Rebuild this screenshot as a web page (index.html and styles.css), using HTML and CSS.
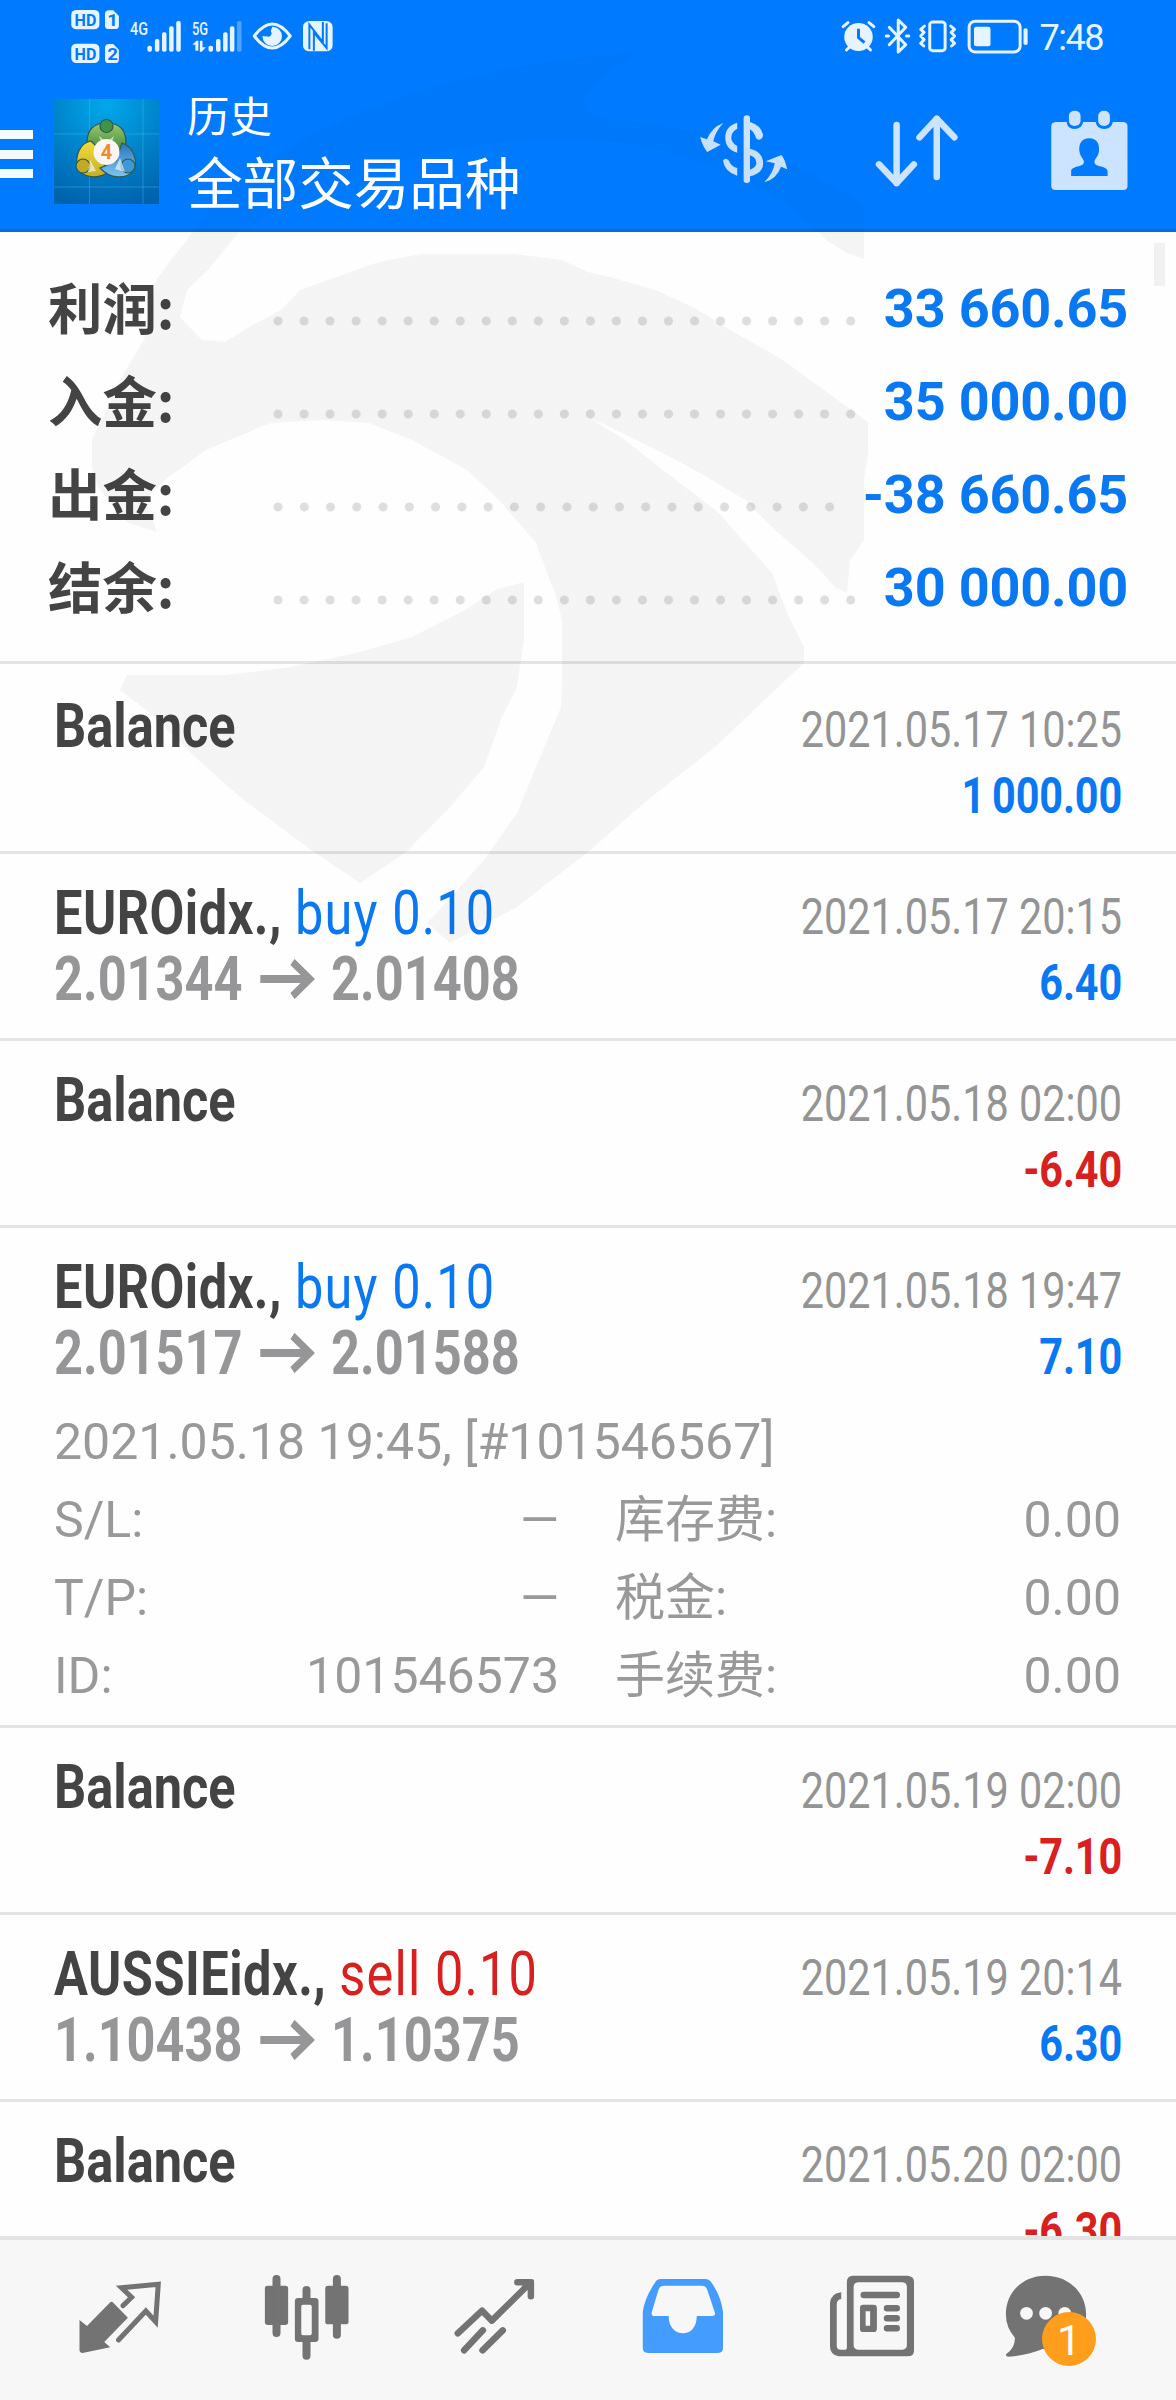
FILE: index.html
```html
<!DOCTYPE html>
<html lang="zh-CN">
<head>
<meta charset="utf-8">
<title>历史</title>
<link rel="stylesheet" href="styles.css">
</head>
<body>
<div class="app">
  <header class="header">
    <div class="status">
      <svg class="status-left" viewBox="0 0 1000 210" preserveAspectRatio="none">
        <rect x="190" y="30" width="75" height="58" rx="14"/>
        <path d="M280 42Q280 31 291 31H302L317 48V77Q317 87 307 87H290Q280 87 280 77Z"/>
        <rect x="190" y="131" width="75" height="58" rx="14"/>
        <path d="M280 143Q280 132 291 132H302L317 149V179Q317 189 307 189H290Q280 189 280 179Z"/>
        <g class="cut"><text x="199" y="79" textLength="58" lengthAdjust="spacingAndGlyphs">HD</text><text x="286" y="79">1</text><text x="199" y="180" textLength="58" lengthAdjust="spacingAndGlyphs">HD</text><text x="286" y="180">2</text></g>
        <g class="net"><text x="347" y="104" textLength="48" lengthAdjust="spacingAndGlyphs">4G</text><text x="512" y="104" textLength="43" lengthAdjust="spacingAndGlyphs">5G</text></g>
        <rect x="393" y="137" width="12" height="18" rx="5"/><rect x="413" y="117" width="12" height="38" rx="5"/><rect x="432" y="97" width="12" height="58" rx="5"/><rect x="451" y="79" width="12" height="76" rx="5"/><rect x="470" y="63" width="12" height="92" rx="5"/>
        <path d="M513 134L524 122H529V152H521V134ZM533 122H540V142H549L538 155H533Z"/>
        <rect x="556" y="137" width="12" height="18" rx="5"/><rect x="576" y="117" width="12" height="38" rx="5"/><rect x="595" y="97" width="12" height="58" rx="5"/><rect x="613" y="79" width="12" height="76" rx="5"/><rect x="632" y="63" width="12" height="92" rx="5" opacity=".35"/>
        <path class="line" d="M678 108Q726 36 774 108Q726 180 678 108Z"/>
        <path d="M726 80A26 29 0 1 1 700 108L718 110Q728 104 722 94Z"/>
        <rect x="808" y="63" width="79" height="91" rx="17"/>
        <path class="nfc" d="M825 148V74L861 126V66M837 152V98L871 144V70"/>
      </svg>
      <svg class="status-right" viewBox="660 0 560 210" preserveAspectRatio="none">
        <path class="line" d="M679 80L692 68M761 80L748 68M688 150L696 141M752 150L744 141"/>
        <ellipse cx="720" cy="111" rx="38" ry="42"/><path class="hand" d="M720 86V113L736 128"/>
        <path class="line" d="M802 82L846 134L826 156V60L846 82L802 134M794 108H800M848 108H854"/>
        <rect class="line" x="910" y="66" width="41" height="86" rx="8"/>
        <path class="line" d="M896 78L886 88L895 97L886 108L895 119L886 130L894 138M966 78L976 88L967 97L976 108L967 119L976 130L968 138"/>
        <rect class="line" x="1015" y="64" width="136" height="92" rx="17"/><rect x="1028" y="80" width="44" height="59" rx="6"/><rect x="1160" y="85" width="11" height="50" rx="5"/>
      </svg>
      <span class="clock">7:48</span>
    </div>
    <div class="bar">
      <svg class="menu" viewBox="0 0 33 48"><path d="M0 0H33V9H0ZM0 20H33V29H0ZM0 39H33V48H0Z"/></svg>
      <svg class="logo" viewBox="0 0 105 105">
        <defs>
          <radialGradient id="bg" cx=".5" cy=".05" r="1"><stop offset="0" stop-color="#00a9ea"/><stop offset=".5" stop-color="#0084cb"/><stop offset="1" stop-color="#0062ad"/></radialGradient>
          <linearGradient id="gr" x2="0" y2="1"><stop stop-color="#9bc96c"/><stop offset="1" stop-color="#2d7c31"/></linearGradient>
          <linearGradient id="ye" x2="0" y2="1"><stop stop-color="#f1dc3c"/><stop offset="1" stop-color="#c9ae24"/></linearGradient>
          <linearGradient id="bl" x2="0" y2="1"><stop stop-color="#2a76b9"/><stop offset="1" stop-color="#7cc6f0"/></linearGradient>
        </defs>
        <rect width="105" height="105" fill="url(#bg)"/>
        <path d="M35.500 0V105M89 0V105M0 35H105M0 88H105" stroke="#5cc3ee" stroke-opacity=".35" fill="none"/>
        <g stroke="#2d5a50" stroke-width="1.200">
          <path d="M33 44Q33 24 52.500 24Q72 24 72 44L67 58H38Z" fill="url(#gr)"/>
          <path d="M37 42C26 44 20 57 24 70C30 79 43 80 53 74L45 50Z" fill="url(#ye)"/>
          <path d="M68 44C79 48 84 60 80 71C72 81 56 80 46 69L62 62Z" fill="url(#bl)"/>
          <circle cx="52.500" cy="27" r="6.500" fill="#3f9448"/><circle cx="29" cy="67" r="7" fill="#c2a928"/><circle cx="74" cy="67" r="7" fill="#3f97d6"/>
        </g>
        <path d="M45 37L52.500 43L60 37L57 46H48ZM36 61L42 72L34 73ZM66 59L61 70L71 73Z" fill="#fff" fill-opacity=".6"/>
        <circle cx="52.500" cy="53" r="13" fill="#fbf6f1"/>
        <text x="52.500" y="60" class="four">4</text>
      </svg>
      <div class="titles"><div class="subtitle">历史</div><div class="title">全部交易品种</div></div>
      <svg class="action dollar" viewBox="296 330 240 246" preserveAspectRatio="none">
        <path d="M361 369Q340 393 334 424L354 434L318 456Q306 440 299 411L317 418Q331 381 361 369ZM470 547Q494 519 498 490L474 484L516 465Q526 480 531 508L515 500Q502 538 470 547Z"/>
        <rect x="415" y="346" width="17" height="203" rx="8"/>
        <path d="M398 368V386Q382 396 382 413Q382 428 398 438V458Q366 447 366 413Q366 378 398 368ZM432 366Q460 375 467 404Q466 417 456 419Q448 418 446 407Q443 396 432 388ZM360 482Q366 471 376 482Q380 498 398 504V527Q365 516 360 482ZM432 446Q467 455 467 490Q467 520 432 529V509Q449 501 449 489Q449 473 432 466Z"/>
      </svg>
      <svg class="action sort" viewBox="760 330 240 246" preserveAspectRatio="none"><path class="thick" d="M823 375V550M776 493L823 549L869 493M930 531V356M884 412L930 356L977 412"/></svg>
      <svg class="action calendar" viewBox="1230 330 213 246" preserveAspectRatio="none">
        <path fill-rule="evenodd" d="M1248 366H1277Q1279 387 1298 387Q1317 387 1321 366H1354Q1358 387 1377 387Q1396 387 1400 366H1428Q1439 368 1439 378V558Q1439 570 1428 570H1248Q1236 570 1236 558V378Q1236 368 1248 366ZM1337 415C1314 415 1309 436 1311 454C1313 472 1323 476 1323 487C1323 502 1289 497 1289 514V528H1386V514C1386 497 1351 502 1351 487C1351 476 1361 472 1363 454C1365 436 1360 415 1337 415Z"/>
        <rect x="1283" y="332" width="31" height="46" rx="15"/><rect x="1361" y="332" width="31" height="46" rx="15"/>
      </svg>
    </div>
  </header>

  <main class="content">
    <section class="summary">
      <div class="sum"><span class="sum-label">利润:</span><span class="dots"></span><span class="sum-value">33 660.65</span></div>
      <div class="sum"><span class="sum-label">入金:</span><span class="dots"></span><span class="sum-value">35 000.00</span></div>
      <div class="sum"><span class="sum-label">出金:</span><span class="dots"></span><span class="sum-value">-38 660.65</span></div>
      <div class="sum"><span class="sum-label">结余:</span><span class="dots"></span><span class="sum-value">30 000.00</span></div>
    </section>

    <article class="deal first">
      <div class="main"><div class="left"><div class="name">Balance</div></div>
      <div class="right"><div class="time">2021.05.17 10:25</div><div class="profit up">1 000.00</div></div></div>
    </article>
    <article class="deal">
      <div class="main"><div class="left"><div class="name symbol">EUROidx., <span class="buy">buy 0.10</span></div><div class="prices">2.01344<svg class="arrow" viewBox="0 0 66 40"><path d="M0 20H60M39 3L60 20L39 37"/></svg>2.01408</div></div>
      <div class="right"><div class="time">2021.05.17 20:15</div><div class="profit up">6.40</div></div></div>
    </article>
    <article class="deal">
      <div class="main"><div class="left"><div class="name">Balance</div></div>
      <div class="right"><div class="time">2021.05.18 02:00</div><div class="profit down">-6.40</div></div></div>
    </article>
    <article class="deal">
      <div class="main"><div class="left"><div class="name symbol">EUROidx., <span class="buy">buy 0.10</span></div><div class="prices">2.01517<svg class="arrow" viewBox="0 0 66 40"><path d="M0 20H60M39 3L60 20L39 37"/></svg>2.01588</div></div>
      <div class="right"><div class="time">2021.05.18 19:47</div><div class="profit up">7.10</div></div></div>
      <div class="details">
        <div class="open">2021.05.18 19:45, [#101546567]</div>
        <div class="pair"><span>S/L:</span><span>—</span></div><div class="pair"><span>库存费:</span><span>0.00</span></div>
        <div class="pair"><span>T/P:</span><span>—</span></div><div class="pair"><span>税金:</span><span>0.00</span></div>
        <div class="pair"><span>ID:</span><span>101546573</span></div><div class="pair"><span>手续费:</span><span>0.00</span></div>
      </div>
    </article>
    <article class="deal">
      <div class="main"><div class="left"><div class="name">Balance</div></div>
      <div class="right"><div class="time">2021.05.19 02:00</div><div class="profit down">-7.10</div></div></div>
    </article>
    <article class="deal">
      <div class="main"><div class="left"><div class="name symbol">AUSSIEidx., <span class="sell">sell 0.10</span></div><div class="prices">1.10438<svg class="arrow" viewBox="0 0 66 40"><path d="M0 20H60M39 3L60 20L39 37"/></svg>1.10375</div></div>
      <div class="right"><div class="time">2021.05.19 20:14</div><div class="profit up">6.30</div></div></div>
    </article>
    <article class="deal">
      <div class="main"><div class="left"><div class="name">Balance</div></div>
      <div class="right"><div class="time">2021.05.20 02:00</div><div class="profit down">-6.30</div></div></div>
    </article>
  </main>

  <nav class="nav">
    <svg viewBox="200 160 240 260" preserveAspectRatio="none">
      <path d="M300 247L341 294L278 367L294 383L220 400Q212 399 212 392V301L232 319L292 250Q296 245 300 247Z"/>
      <path class="s6" d="M328 258L351 233L324 204L422 194L415 306L389 274L316 361"/>
    </svg>
    <svg viewBox="701 160 240 260" preserveAspectRatio="none">
      <rect x="706" y="198" width="62" height="118" rx="8"/><rect x="867" y="198" width="62" height="116" rx="8"/>
      <path class="s8" d="M737 178V340M898 178V345M817 211V240M817 365V408"/>
      <path fill-rule="evenodd" d="M795 235H840Q849 235 849 244V358Q849 367 840 367H795Q786 367 786 358V244Q786 235 795 235ZM808 255Q803 255 803 261V341Q803 347 808 347H826Q831 347 831 341V261Q831 255 826 255Z"/>
    </svg>
    <svg viewBox="1203 160 240 260" preserveAspectRatio="none">
      <path class="s7" d="M1221 341L1286 273L1312 303L1412 192M1380 188H1416V230M1238 392L1288 332M1287 392L1341 332"/>
      <path d="M1380 180H1424V230L1400 200Z"/>
    </svg>
    <svg class="active" viewBox="136 280 240 260" preserveAspectRatio="none">
      <path fill-rule="evenodd" d="M194 298H312Q324 298 330 310Q355 350 360 397V506Q360 520 347 520H160Q146 520 146 506V397Q151 355 178 310Q183 298 194 298ZM202 318Q192 318 188 330L170 398Q168 409 178 409H215C215 444 234 461 253 461C273 461 290 444 290 409H330Q341 409 338 398L318 330Q314 318 304 318Z"/>
    </svg>
    <svg viewBox="637 280 240 260" preserveAspectRatio="none">
      <path fill-rule="evenodd" d="M706 288H852Q869 290 869 306V513Q869 530 852 530H668Q645 526 645 500V370Q648 340 675 338V358Q663 360 663 374V499Q663 510 674 510H686Q690 509 690 504V306Q690 289 706 288ZM720 308Q708 309 708 322V496Q708 509 720 510H838Q850 509 850 496V322Q850 309 838 308Z"/>
      <path fill-rule="evenodd" d="M733 375H761Q770 375 770 385V447Q770 457 761 457H733Q725 457 725 447V385Q725 375 733 375ZM740 395V438H752V395Z"/>
      <path class="s7" d="M735 346H823M797 386H823M797 416H823M797 446H823"/>
    </svg>
    <div class="chat">
      <svg viewBox="1101 280 240 260" preserveAspectRatio="none">
        <path d="M1220 288C1285 288 1328 343 1328 404C1328 465 1283 512 1212 508Q1172 527 1123 531Q1112 531 1115 523Q1139 505 1138 474Q1114 444 1114 404C1114 340 1157 288 1220 288Z"/>
        <g class="holes"><ellipse cx="1169" cy="401" rx="17" ry="19"/><ellipse cx="1220" cy="401" rx="17" ry="19"/><ellipse cx="1271" cy="401" rx="17" ry="19"/></g>
      </svg>
      <span class="badge">1</span>
    </div>
  </nav>

  <svg class="watermark" viewBox="0 0 1176 960">
    <defs><linearGradient id="wm" gradientUnits="userSpaceOnUse" x1="0" y1="0" x2="0" y2="960"><stop offset=".2417" stop-color="#000" stop-opacity=".02"/><stop offset=".2417" stop-color="#000" stop-opacity=".038"/></linearGradient></defs>
    <path d="M187 240C250 140 430 65 637 53C600 75 560 105 600 118C700 125 800 160 864 205V259L847 253L826 240C780 190 700 150 600 140C450 130 330 180 238 233L208 270L187 290L180 317L202 340L225 342L244 330L281 310L300 290L337 277L379 262L422 254H515L562 260L588 272L610 277L655 290L693 307L730 330L783 360L828 393L868 422V453L864 480V540L850 560L847 593L835 587L813 563L775 530L745 500L700 473L663 453L610 427L575 412L588 417L625 440L663 470L719 513L745 543L772 573L787 613L804 647V663L775 690L715 747L644 803L588 852L517 907L450 943L427 923L442 907L484 860L517 813L536 767L561 707L562 680V620L555 593L547 573L536 543L499 500L467 470L412 440L369 423L322 420L270 423L206 450L165 480L145 500L157 532L128 523L98 487L92 467V440L98 427L124 373L144 340L156 280L171 260Z"/>
    <path d="M524 582L495 590L465 610L412 637L356 653L285 668L225 675H127L120 690L150 713L195 757L240 797L311 850L360 883L405 853L450 807L484 767L502 717L517 687L524 640Z"/>
  </svg>
  <div class="scrollbar"></div>
</div>
</body>
</html>
```
FILE: styles.css
```css
* { box-sizing: border-box; }
body { margin: 0; background: #fff; font-family: Roboto, "Noto Sans CJK SC", sans-serif; }
.app { position: relative; width: 1176px; height: 2400px; display: flex; flex-direction: column; overflow: hidden; background: #fefefe; }
svg { display: block; flex: none; }

.header { flex: none; height: 232px; background: #007aff; border-bottom: 3px solid #1069cd; color: #fff; }
.status { display: flex; height: 70px; fill: #e6f4ff; }
.status-left { width: 375px; height: 70px; }
.status-right { width: 210px; height: 70px; margin-left: 460.500px; margin-right: -15px; }
.clock { font-size: 36px; line-height: 76px; color: #e6f4ff; letter-spacing: -1.500px; margin-left: 9px; }
.line, .thick { fill: none; stroke: #e6f4ff; stroke-width: 3px; vector-effect: non-scaling-stroke; stroke-linecap: round; stroke-linejoin: round; }
.hand, .nfc { fill: none; stroke: #007aff; stroke-width: 3px; vector-effect: non-scaling-stroke; }
.nfc { stroke-width: 2px; }
.cut { fill: #007aff; font: 700 50px Roboto, sans-serif; }
.net { font: 500 53px Roboto, sans-serif; }
.bar { display: flex; fill: #cce4ff; }
.menu { width: 33px; height: 48px; margin-top: 60px; fill: #f4fbff; }
.logo { width: 105px; height: 105px; margin: 29px 28px 0 21px; }
.four { font: 700 20px Roboto, sans-serif; text-anchor: middle; fill: #f08a30; }
.titles { width: 508px; padding-top: 14px; font-family: "Noto Sans CJK SC", sans-serif; }
.subtitle { font-size: 42.500px; line-height: 60px; }
.title { font-size: 55.600px; line-height: 73px; }
.action { height: 82px; margin-top: 40px; }
.dollar { width: 90px; margin-left: 4px; }
.sort { width: 90px; margin-left: 84px; }
.calendar { width: 80px; margin-left: 86px; }
.thick { stroke: #cce4ff; stroke-width: 6.500px; }

.content { flex: none; height: 2004px; overflow: hidden; }
.summary { height: 432px; padding: 33px 48px 0 48px; border-bottom: 3px solid #e4e4e4; }
.sum { display: flex; height: 93px; line-height: 87px; font-size: 54px; font-weight: 700; color: #444; }
.sum-label { width: 217px; line-height: 81px; font-size: 54.400px; font-family: "Noto Sans CJK SC", sans-serif; }
.dots { flex: 1; margin-right: 20px; background: radial-gradient(circle at 13px 56px, #dedede 4px, transparent 5px) 0 0 / 26px 93px; background-repeat: round no-repeat; }
.sum-value { color: #0a78f0; letter-spacing: -.200px; }

.deal { height: 187px; padding: 26px 54px 0 54px; border-bottom: 3px solid #e4e4e4; }
.deal.first { height: 190px; padding-top: 29px; }
.deal:has(.details) { height: 500px; }
.main { display: flex; justify-content: space-between; align-items: baseline; line-height: 66px; white-space: nowrap; }
.left { transform: scaleX(.828); transform-origin: 0 0; width: 600px; font-size: 61px; font-weight: 700; color: #444; }
.right { transform: scaleX(.828); transform-origin: 100% 0; text-align: right; font-size: 50px; color: #949494; }
.symbol { letter-spacing: .600px; }
.name span { font-weight: 400; letter-spacing: 1.400px; }
.buy, .up { color: #0a78f0; }
.sell, .down { color: #d8201f; }
.prices { display: flex; align-items: center; color: #969698; }
.arrow { width: 66px; height: 40px; margin: 0 20px 0 21px; fill: none; stroke: #969698; stroke-width: 8px; }
.profit { font-weight: 700; word-spacing: -4px; letter-spacing: -.150px; }

.details { display: grid; grid-template-columns: 505px 506px; column-gap: 56px; grid-auto-rows: 78px; line-height: 78px; font-size: 50px; font-weight: 400; color: #999; padding-top: 13px; }
.open { grid-column: 1 / -1; }
.pair { display: flex; justify-content: space-between; }

.nav { flex: none; height: 164px; border-top: 4px solid #e3e3e3; background: #f7f7f7; display: flex; gap: 98px; padding: 33px 0 0 75px; fill: #737373; }
.nav svg { width: 90px; height: 86.670px; }
.nav .active { fill: #459cff; }
.s6, .s7, .s8 { fill: none; stroke: #737373; stroke-width: 6.500px; stroke-linecap: round; stroke-linejoin: round; vector-effect: non-scaling-stroke; }
.s6 { stroke-width: 5px; stroke-linejoin: miter; }
.s8 { stroke-width: 8px; }
.chat { position: relative; margin-left: -14px; }
.holes { fill: #f7f7f7; }
.badge { position: absolute; left: 41px; top: 39px; width: 54px; height: 54px; border-radius: 50%; background: #ff9d1c; color: #fff; font-size: 43px; line-height: 56px; text-align: center; }

.watermark { position: absolute; left: 0; top: 0; width: 1176px; height: 960px; fill: url(#wm); pointer-events: none; }
.scrollbar { position: absolute; left: 1154px; top: 243px; width: 11px; height: 43px; background: #f1f1f1; }
```
